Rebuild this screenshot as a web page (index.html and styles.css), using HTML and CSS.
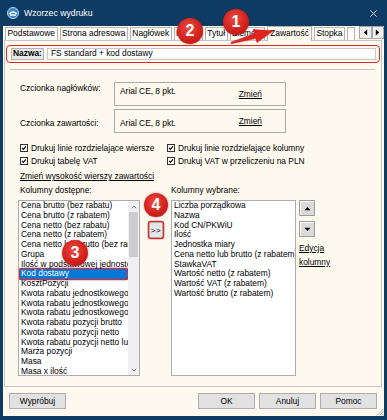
FILE: index.html
```html
<!DOCTYPE html>
<html lang="pl">
<head>
<meta charset="utf-8">
<title>Wzorzec wydruku</title>
<link rel="stylesheet" href="styles.css">
</head>
<body>
<div class="window">
  <div class="titlebar">
    <svg class="appicon" viewBox="0 0 12 12">
      <circle cx="6" cy="6" r="5.5" fill="#3f86c4" stroke="#cfe2f2" stroke-width="0.9"/>
      <path d="M2.3 7 Q6 3.2 9.7 7" fill="none" stroke="#ffffff" stroke-width="1.5"/>
      <rect x="3" y="7.3" width="6" height="1.6" fill="#e8f1f8"/>
    </svg>
    <span class="title">Wzorzec wydruku</span>
    <svg class="close" viewBox="0 0 8 8"><path d="M0.5 0.5 L7.5 7.5 M7.5 0.5 L0.5 7.5" stroke="#d9e2ea" stroke-width="1.1"/></svg>
  </div>
  <div class="client">
    <div class="tabs">
      <div class="tab">Podstawowe</div>
      <div class="tab">Strona adresowa</div>
      <div class="tab">Nagłówek</div>
      <div class="tab">Papier</div>
      <div class="tab">Tytuł</div>
      <div class="tab">Element</div>
      <div class="tab active">Zawartość</div>
      <div class="tab">Stopka</div>
      <div class="tab stub"></div>
      <div class="tab-arrows">
        <div class="tab-arrow"><svg viewBox="0 0 6 8"><path d="M5 0.5 L1 4 L5 7.5 Z" fill="#000"/></svg></div>
        <div class="tab-arrow"><svg viewBox="0 0 6 8"><path d="M1 0.5 L5 4 L1 7.5 Z" fill="#000"/></svg></div>
      </div>
    </div>
    <div class="panel">
      <div class="name-row">
        <span class="name-label">Nazwa:</span>
        <span class="name-input">FS standard + kod dostawy</span>
      </div>
      <div class="sep"></div>
      <div class="font-row first">
        <span class="font-label">Czcionka nagłówków:</span>
        <div class="font-box">
          <span class="font-value">Arial CE, 8 pkt.</span>
          <span class="link change">Zmień</span>
        </div>
      </div>
      <div class="font-row second">
        <span class="font-label">Czcionka zawartości:</span>
        <div class="font-box">
          <span class="font-value">Arial CE, 8 pkt.</span>
          <span class="link change">Zmień</span>
        </div>
      </div>
      <div class="checks">
        <label class="check"><span class="box"><svg viewBox="0 0 8 8"><path d="M1.4 3.9 L3.2 5.8 L6.6 1.8" fill="none" stroke="#000" stroke-width="1.4"/></svg></span>Drukuj linie rozdzielające wiersze</label>
        <label class="check"><span class="box"><svg viewBox="0 0 8 8"><path d="M1.4 3.9 L3.2 5.8 L6.6 1.8" fill="none" stroke="#000" stroke-width="1.4"/></svg></span>Drukuj linie rozdzielające kolumny</label>
        <label class="check"><span class="box"><svg viewBox="0 0 8 8"><path d="M1.4 3.9 L3.2 5.8 L6.6 1.8" fill="none" stroke="#000" stroke-width="1.4"/></svg></span>Drukuj tabelę VAT</label>
        <label class="check"><span class="box"><svg viewBox="0 0 8 8"><path d="M1.4 3.9 L3.2 5.8 L6.6 1.8" fill="none" stroke="#000" stroke-width="1.4"/></svg></span>Drukuj VAT w przeliczeniu na PLN</label>
      </div>
      <div class="link height-link">Zmień wysokość wierszy zawartości</div>
      <div class="columns">
        <div class="col left-col">
          <div class="col-label pad">Kolumny dostępne:</div>
          <div class="listbox">
            <div class="items">
              <div class="item">Cena brutto (bez rabatu)</div>
              <div class="item">Cena brutto (z rabatem)</div>
              <div class="item">Cena netto (bez rabatu)</div>
              <div class="item">Cena netto (z rabatem)</div>
              <div class="item">Cena netto lub brutto (bez rabatu)</div>
              <div class="item">Grupa</div>
              <div class="item">Ilość w podstawowej jednostce</div>
              <div class="item selected">Kod dostawy</div>
              <div class="item">KosztPozycji</div>
              <div class="item">Kwota rabatu jednostkowego brutto</div>
              <div class="item">Kwota rabatu jednostkowego netto</div>
              <div class="item">Kwota rabatu jednostkowego netto lub brutto</div>
              <div class="item">Kwota rabatu pozycji brutto</div>
              <div class="item">Kwota rabatu pozycji netto</div>
              <div class="item">Kwota rabatu pozycji netto lub brutto</div>
              <div class="item">Marża pozycji</div>
              <div class="item">Masa</div>
              <div class="item">Masa x ilość</div>
            </div>
            <div class="sb">
              <div class="sb-btn"><svg viewBox="0 0 7 5"><path d="M1 4 L3.5 1.3 L6 4" fill="none" stroke="#606060" stroke-width="1"/></svg></div>
              <div class="sb-thumb"></div>
              <div class="sb-track"></div>
              <div class="sb-btn"><svg viewBox="0 0 7 5"><path d="M1 1 L3.5 3.7 L6 1" fill="none" stroke="#606060" stroke-width="1"/></svg></div>
            </div>
          </div>
        </div>
        <div class="col mid-col">
          <div class="mini-btn">&lt;&lt;</div>
          <div class="mini-btn marked">&gt;&gt;</div>
        </div>
        <div class="col right-col">
          <div class="col-label">Kolumny wybrane:</div>
          <div class="listbox">
            <div class="items">
              <div class="item">Liczba porządkowa</div>
              <div class="item">Nazwa</div>
              <div class="item">Kod CN/PKWiU</div>
              <div class="item">Ilość</div>
              <div class="item">Jednostka miary</div>
              <div class="item">Cena netto lub brutto (z rabatem)</div>
              <div class="item">StawkaVAT</div>
              <div class="item">Wartość netto (z rabatem)</div>
              <div class="item">Wartość VAT (z rabatem)</div>
              <div class="item">Wartość brutto (z rabatem)</div>
            </div>
          </div>
        </div>
        <div class="col side-col">
          <div class="move-btn"><svg viewBox="0 0 8 5"><path d="M0.5 4.5 L4 0.8 L7.5 4.5 Z" fill="#000"/></svg></div>
          <div class="move-btn"><svg viewBox="0 0 8 5"><path d="M0.5 0.5 L4 4.2 L7.5 0.5 Z" fill="#000"/></svg></div>
          <div class="link edit-link">Edycja<br>kolumny</div>
        </div>
      </div>
    </div>
    <div class="footer">
      <div class="btn">Wypróbuj</div>
      <div class="spacer"></div>
      <div class="btn">OK</div>
      <div class="btn">Anuluj</div>
      <div class="btn">Pomoc</div>
      <svg class="grip" viewBox="0 0 8 8"><path d="M7.5 1 L1 7.5 M7.5 3.5 L3.5 7.5 M7.5 6 L6 7.5" stroke="#a0a0a0" stroke-width="0.8"/></svg>
    </div>
  </div>

  <svg class="annot-arrow" viewBox="0 0 387 60">
    <polygon points="230.9,42.3 254.3,33.7 253.0,29.6 273.5,30.8 257.0,42.6 255.7,38.6 231.2,43.7" fill="#e3231f" stroke="#c21512" stroke-width="0.5"/>
  </svg>
  <div class="badge b1">1</div>
  <div class="badge b2">2</div>
  <div class="badge b3">3</div>
  <div class="badge b4">4</div>
</div>
</body>
</html>
```

FILE: styles.css
```css
* { box-sizing: border-box; }
html, body { margin: 0; padding: 0; }
body {
  width: 387px;
  height: 420px;
  overflow: hidden;
  background: #0e3b63;
  font-family: "Liberation Sans", Arial, sans-serif;
  font-size: 8.4px;
  color: #000;
}
.window {
  position: relative;
  width: 387px;
  height: 420px;
  display: flex;
  flex-direction: column;
}
.titlebar {
  height: 26px;
  display: flex;
  align-items: center;
  padding-left: 7px;
  color: #fff;
}
.appicon { width: 12px; height: 12px; margin-right: 5px; }
.title { flex: 1; font-size: 8.7px; }
.close { width: 7px; height: 7px; margin-right: 10px; }

.client {
  flex: 1;
  margin: 0 3px 4px 3px;
  background: #fdf9ef;
  display: flex;
  flex-direction: column;
  position: relative;
}
.tabs {
  height: 14px;
  display: flex;
  align-items: flex-end;
  gap: 2px;
  padding-left: 2px;
  position: relative;
  z-index: 1;
}
.tab {
  height: 13px;
  border: 1px solid #b4b4b4;
  border-bottom: none;
  background: #fdfdfb;
  padding: 0 1.5px;
  line-height: 11px;
  white-space: nowrap;
}
.tab.active {
  height: 15px;
  margin-bottom: -1px;
  background: #fdf9ef;
  line-height: 12px;
  padding: 0 2px;
}
.tab.stub { width: 8px; }
.tab-arrows {
  margin-left: auto;
  display: flex;
  height: 13px;
  margin-bottom: 1px;
}
.tab-arrow {
  width: 12.5px;
  height: 13px;
  border: 1px solid #a8a8a8;
  background: #f0f0f0;
  display: flex;
  align-items: center;
  justify-content: center;
}
.tab-arrow svg { width: 5px; height: 7px; }

.panel {
  height: 347px;
  margin: 0 2px 0 1px;
  border: 1px solid #c6c6c6;
  display: flex;
  flex-direction: column;
}
.name-row {
  margin: 4px 1px 0 1px;
  height: 18px;
  border: 1.5px solid #e0282b;
  border-radius: 4px;
  padding: 2px 3px 2px 3.5px;
  display: flex;
  align-items: stretch;
}
.name-label {
  width: 33px;
  background: #e9e9e9;
  border: 1px solid #b5b5b5;
  font-weight: bold;
  padding-left: 1.5px;
  line-height: 9px;
}
.name-input {
  flex: 1;
  margin-left: 3px;
  background: #fff;
  border: 1px solid #c8c8c8;
  padding-left: 3.5px;
  line-height: 9px;
}
.sep {
  margin: 6px 6px 0 5px;
  border-top: 1px solid #c4c4c4;
}
.font-row {
  display: flex;
  padding-left: 15px;
  margin-top: 3px;
}
.font-row.first { margin-top: 12px; }
.font-label { width: 94px; line-height: 12px; }
.font-row.first .font-label { padding-top: 0; }
.font-row.second .font-label { padding-top: 8px; }
.font-box {
  width: 172px;
  height: 24px;
  border: 1px solid #aaaaaa;
  display: flex;
  padding-left: 5px;
}
.font-value { flex: 1; line-height: 12px; }
.font-row.first .font-value { padding-top: 2px; }
.font-row.second .font-value { padding-top: 7px; }
.change { line-height: 12px; padding-top: 5px; margin-right: 23px; }
.link { text-decoration: underline; color: #000; }

.checks {
  margin-top: 8px;
  padding-left: 15px;
  display: grid;
  grid-template-columns: 147px auto;
  grid-auto-rows: 13px;
}
.check {
  display: flex;
  align-items: center;
  white-space: nowrap;
}
.box {
  width: 8px;
  height: 8px;
  border: 1px solid #333;
  background: #fff;
  margin-right: 3px;
  display: flex;
}
.box svg { width: 6px; height: 6px; }
.height-link {
  margin-top: 3px;
  padding-left: 15px;
  line-height: 12px;
}
.columns {
  margin-top: 2px;
  padding-left: 13px;
  display: flex;
  align-items: flex-start;
}
.col { display: flex; flex-direction: column; }
.left-col { width: 122px; }
.mid-col { width: 14px; margin-left: 9px; padding-top: 16px; gap: 6px; }
.right-col { width: 125px; margin-left: 8px; }
.side-col { width: 17px; margin-left: 3px; padding-top: 16px; }
.col-label { line-height: 12px; white-space: nowrap; }
.col-label.pad { padding-left: 2px; }
.listbox {
  margin-top: 4px;
  height: 176px;
  border: 1px solid #abadb3;
  background: #fff;
  display: flex;
}
.items {
  flex: 1;
  overflow: hidden;
}
.item {
  margin-left: 1px;
  padding-left: 1px;
  height: 9.75px;
  line-height: 9.75px;
  white-space: nowrap;
}
.item.selected {
  background: #0078d7;
  color: #fff;
  border-radius: 1px;
  box-shadow: 0 0 0 1.3px #e0282b;
  margin-right: 1px;
}
.sb {
  width: 11px;
  background: #f0f0f0;
  display: flex;
  flex-direction: column;
}
.sb-btn {
  height: 11px;
  display: flex;
  align-items: center;
  justify-content: center;
}
.sb-btn svg { width: 6px; height: 4px; }
.sb-thumb {
  height: 45px;
  margin: 0 1px;
  background: #cdcdcd;
}
.sb-track { flex: 1; }
.mini-btn {
  height: 16px;
  border: 1px solid #adadad;
  background: #e6e6e6;
  display: flex;
  align-items: center;
  justify-content: center;
  letter-spacing: 0.5px;
  font-size: 8px;
}
.mini-btn.marked {
  box-shadow: 0 0 0 1.3px #e0282b;
  border-radius: 2px;
}
.move-btn {
  height: 16px;
  width: 16px;
  border: 1px solid #9c9c9c;
  background: #dadada;
  box-shadow: inset 1px 1px 0 #ffffff;
  display: flex;
  align-items: center;
  justify-content: center;
}
.move-btn + .move-btn { margin-top: 5px; }
.move-btn svg { width: 7px; height: 5px; }
.edit-link {
  margin-top: 4px;
  line-height: 14px;
  white-space: nowrap;
}

.footer {
  flex: 1;
  display: flex;
  align-items: flex-start;
  padding: 6px 7px 0 6px;
  gap: 4px;
  position: relative;
}
.spacer { flex: 1; }
.btn {
  width: 57px;
  height: 16px;
  border: 1px solid #adadad;
  background: #e1e1e1;
  display: flex;
  align-items: center;
  justify-content: center;
}
.grip {
  position: absolute;
  right: 0;
  bottom: 0;
  width: 8px;
  height: 8px;
}

.annot-arrow {
  position: absolute;
  left: 0;
  top: 0;
  width: 387px;
  height: 60px;
  pointer-events: none;
  z-index: 4;
}
.badge {
  position: absolute;
  z-index: 5;
  width: 26px;
  height: 26px;
  border-radius: 50%;
  background: radial-gradient(circle at 45% 38%, #ec4a42 0%, #d3221d 55%, #a91410 100%);
  box-shadow: 0 0 2px rgba(110, 0, 0, 0.55);
  color: #fff;
  font-family: "Liberation Sans", Arial, sans-serif;
  font-weight: bold;
  font-size: 16px;
  display: flex;
  align-items: center;
  justify-content: center;
}
.b1 { left: 223px; top: 9px; }
.b2 { left: 177px; top: 18px; }
.b3 { left: 62px; top: 240px; }
.b4 { left: 144px; top: 193px; width: 24px; height: 24px; }
```
